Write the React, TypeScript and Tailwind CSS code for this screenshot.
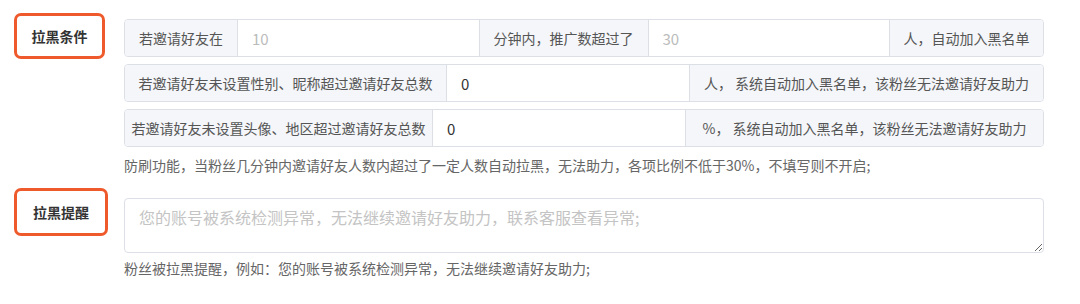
import type React from "react";

const font = { fontFamily: '"Noto Sans CJK SC", "Noto Sans", sans-serif' };

// addon cell of an input group
const Addon: React.FC<{ w: string; text: string; last?: boolean }> = ({ w, text, last }) => (
    <div className={`${w} shrink-0 h-full flex items-center justify-center bg-[#f4f6f9] text-[14px] text-[#555] whitespace-nowrap ${last ? "border-l" : "border-r"} border-[#dcdfe6]`}>
        {text}
    </div>
)

const Field: React.FC<{ placeholder?: string; value?: string }> = ({ placeholder, value }) => (
    <input
        className="flex-1 min-w-0 h-full px-[14px] text-[15px] text-[#333] placeholder:text-[#bbb] outline-none bg-white"
        placeholder={placeholder}
        defaultValue={value}
    />
)

const Label: React.FC<{ text: string; w: string; h: string }> = ({ text, w, h }) => (
    <div className={`${w} ${h} shrink-0 ml-[14px] border-[3px] border-[#ef5a2c] rounded-[7px] flex items-center justify-center text-[14px] font-bold text-[#333]`}>
        {text}
    </div>
)

const App: React.FC = () => {
    return (
        <div className="w-[1080px] h-[304px] bg-white pt-[13px]" style={font}>

            {/* 拉黑条件 */}
            <div className="flex items-start">
                <Label text="拉黑条件" w="w-[91px]" h="h-[46px]" />

                <div className="ml-[19px] w-[920px] pt-[6px] flex flex-col">
                    <div className="flex flex-col gap-[7px]">
                        <div className="h-[38px] flex border border-[#dcdfe6] rounded-[4px] overflow-hidden">
                            <Addon w="w-[113px]" text="若邀请好友在" />
                            <Field placeholder="10" />
                            <div className="w-[170px] shrink-0 h-full flex items-center justify-center bg-[#f4f6f9] text-[14px] text-[#555] whitespace-nowrap border-x border-[#dcdfe6]">
                                分钟内，推广数超过了
                            </div>
                            <Field placeholder="30" />
                            <Addon w="w-[154px]" text="人，自动加入黑名单" last />
                        </div>

                        <div className="h-[38px] flex border border-[#dcdfe6] rounded-[4px] overflow-hidden">
                            <Addon w="w-[322px]" text="若邀请好友未设置性别、昵称超过邀请好友总数" />
                            <Field value="0" />
                            <Addon w="w-[354px]" text="人， 系统自动加入黑名单，该粉丝无法邀请好友助力" last />
                        </div>

                        <div className="h-[38px] flex border border-[#dcdfe6] rounded-[4px] overflow-hidden">
                            <Addon w="w-[308px]" text="若邀请好友未设置头像、地区超过邀请好友总数" />
                            <Field value="0" />
                            <Addon w="w-[358px]" text="%， 系统自动加入黑名单，该粉丝无法邀请好友助力" last />
                        </div>
                    </div>

                    <p className="mt-[8px] text-[14px] leading-[20px] text-[#666]">
                        防刷功能，当粉丝几分钟内邀请好友人数内超过了一定人数自动拉黑，无法助力，各项比例不低于30%，不填写则不开启;
                    </p>
                </div>
            </div>

            {/* 拉黑提醒 */}
            <div className="flex items-start mt-[13px]">
                <Label text="拉黑提醒" w="w-[94px]" h="h-[48px]" />

                <div className="ml-[16px] w-[920px] pt-[10px] flex flex-col">
                    <textarea
                        className="h-[55px] border border-[#dcdfe6] rounded-[4px] px-[14px] py-[6px] text-[16px] text-[#333] placeholder:text-[#c4c4c4] outline-none"
                        placeholder="您的账号被系统检测异常，无法继续邀请好友助力，联系客服查看异常;"
                    />
                    <p className="mt-[5px] text-[14px] leading-[20px] text-[#666]">
                        粉丝被拉黑提醒，例如：您的账号被系统检测异常，无法继续邀请好友助力;
                    </p>
                </div>
            </div>
        </div>
    )
}

export default App
